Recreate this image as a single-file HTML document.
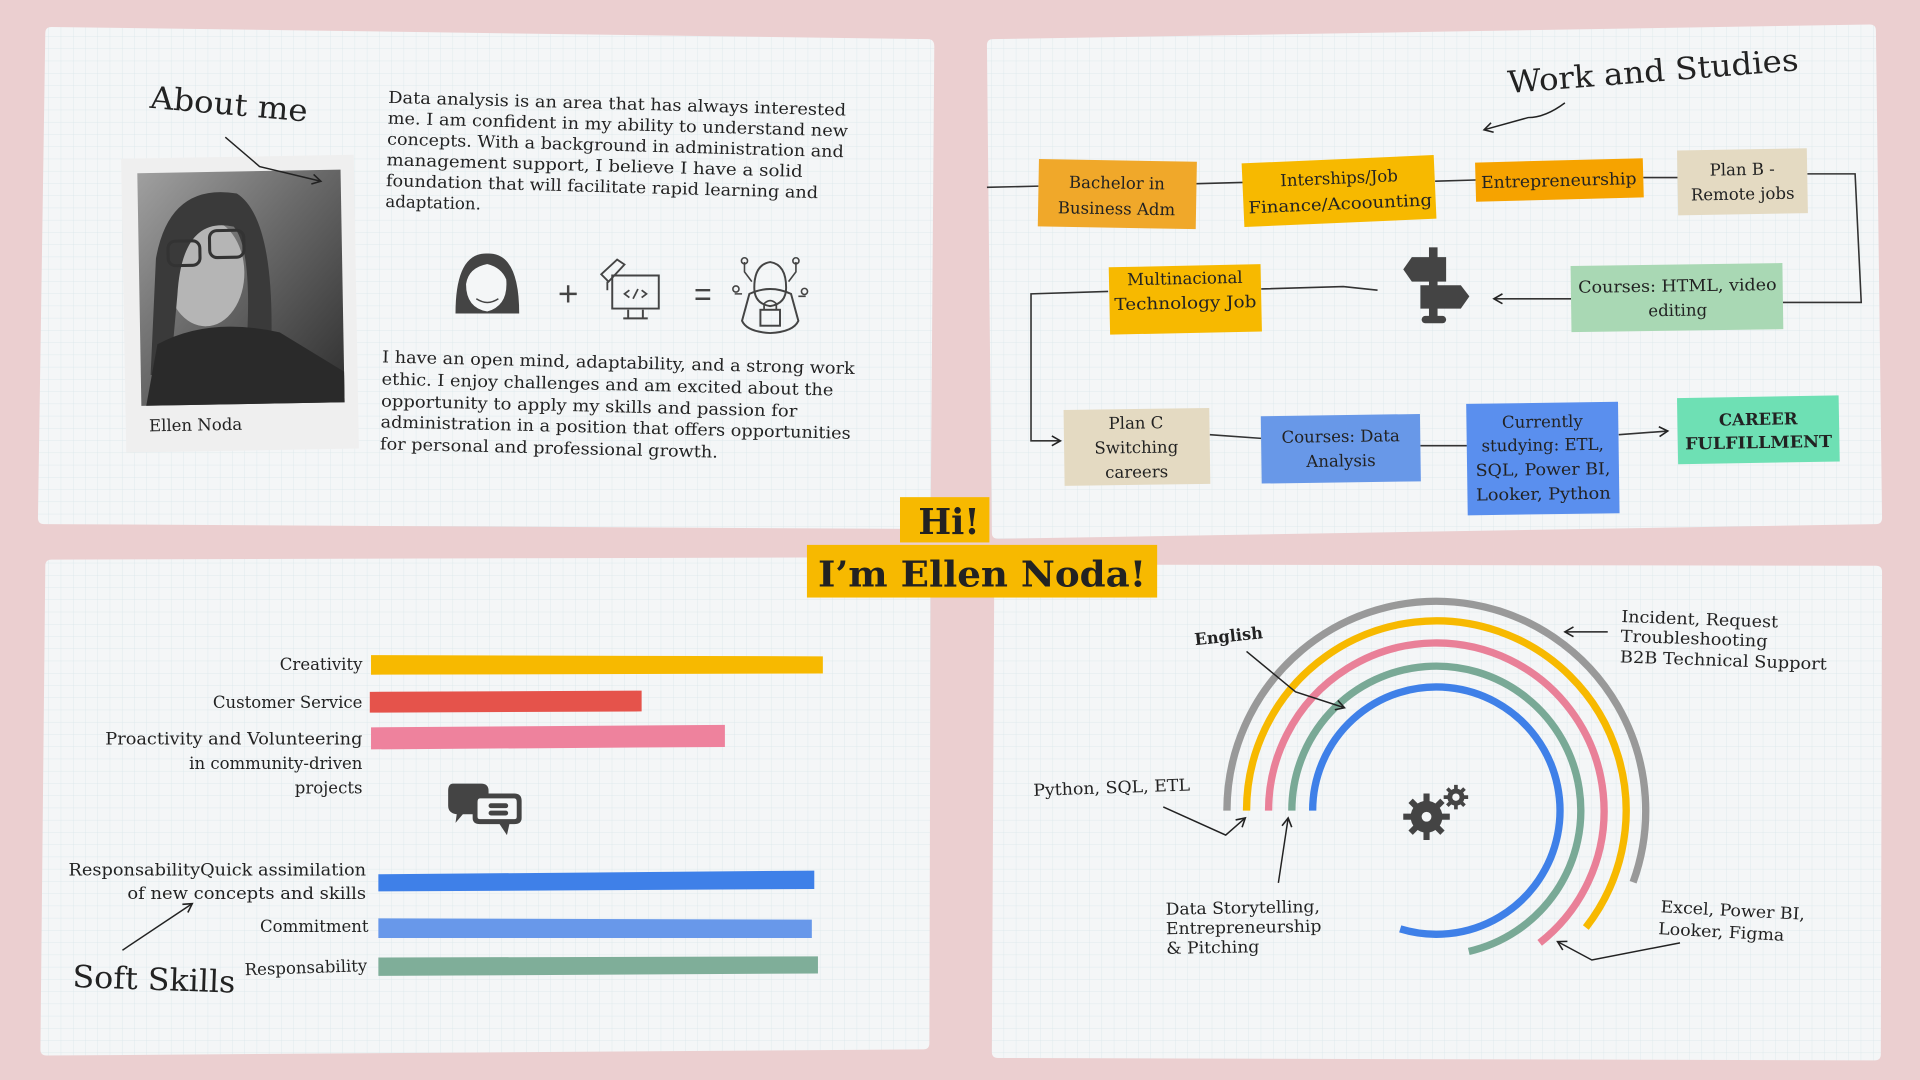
<!DOCTYPE html>
<html><head><meta charset="utf-8"><style>
html,body{margin:0;padding:0;background:#ebcfd0;}
svg{display:block;}
text{font-family:"DejaVu Serif","Liberation Serif",serif;fill:#222;}
</style></head><body>
<svg width="1920" height="1080" viewBox="0 0 1568 882" preserveAspectRatio="none" xmlns="http://www.w3.org/2000/svg">
<defs>
<pattern id="g" width="10" height="10" patternUnits="userSpaceOnUse">
<rect width="10" height="10" fill="#f4f6f7"/>
<path d="M10 0V10M0 10H10" stroke="#d9e6ea" stroke-width="0.6" fill="none"/>
</pattern>
<marker id="ah" markerWidth="10" markerHeight="10" refX="8" refY="5" orient="auto" markerUnits="userSpaceOnUse">
<path d="M1 1L8 5L1 9" fill="none" stroke="#222" stroke-width="1.3"/>
</marker>
<linearGradient id="ph" x1="0" y1="0" x2="1" y2="1"><stop offset="0" stop-color="#a0a0a0"/><stop offset="0.45" stop-color="#6a6a6a"/><stop offset="1" stop-color="#2e2e2e"/></linearGradient>
</defs>
<rect width="1568" height="882" fill="#ebcfd0"/>
<!-- cards -->
<path d="M42 22L758 32Q763 32 763 38L760 427Q760 432 755 432L36 428Q31 428 31 423L37 27Q37 22 42 22Z" fill="url(#g)"/>
<path d="M811 32L1527 20Q1532 20 1532 25L1537 423Q1537 428 1532 428L815 440Q810 440 810 435L806 37Q806 32 811 32Z" fill="url(#g)"/>
<path d="M42 457L755 455Q760 455 760 460L759 852Q759 857 754 857L38 862Q33 862 33 857L37 462Q37 457 42 457Z" fill="url(#g)"/>
<path d="M817 461L1532 462Q1537 462 1537 467L1536 861Q1536 866 1531 866L815 864Q810 864 810 859L812 466Q812 461 817 461Z" fill="url(#g)"/>

<!-- ABOUT ME -->
<text x="122" y="88" font-size="25" textLength="129" lengthAdjust="spacingAndGlyphs" transform="rotate(5 122 88)">About me</text>
<g transform="rotate(-1 196 248)">
<rect x="101" y="128" width="190" height="240" fill="#efefef"/>
<rect x="114" y="140" width="166" height="190" fill="url(#ph)"/>
<ellipse cx="168" cy="222" rx="32" ry="44" fill="#b5b5b5"/>
<path d="M128 210Q140 148 195 158Q228 180 220 300L200 292Q208 205 192 185Q150 175 145 240L138 305L122 305Z" fill="#3a3a3a"/>
<path d="M118 330L128 280Q170 258 228 272L280 305L280 330Z" fill="#2a2a2a"/>
<rect x="138" y="196" width="26" height="20" rx="6" fill="none" stroke="#333" stroke-width="2.5"/>
<rect x="172" y="188" width="28" height="22" rx="6" fill="none" stroke="#333" stroke-width="2.5"/>
<text x="120" y="351" font-size="13.5">Ellen Noda</text>
</g>
<path d="M184 112L212 136L262 148" fill="none" stroke="#222" stroke-width="1.2" marker-end="url(#ah)"/>
<g transform="rotate(1.6 317 84)" font-size="13.5">
<text x="317" y="84" textLength="374" lengthAdjust="spacingAndGlyphs">Data analysis is an area that has always interested</text>
<text x="317" y="101" textLength="376" lengthAdjust="spacingAndGlyphs">me. I am confident in my ability to understand new</text>
<text x="317" y="118" textLength="373" lengthAdjust="spacingAndGlyphs">concepts. With a background in administration and</text>
<text x="317" y="135" textLength="340" lengthAdjust="spacingAndGlyphs">management support, I believe I have a solid</text>
<text x="317" y="152" textLength="353" lengthAdjust="spacingAndGlyphs">foundation that will facilitate rapid learning and</text>
<text x="317" y="169" textLength="78" lengthAdjust="spacingAndGlyphs">adaptation.</text>
</g>
<g transform="rotate(1.4 312 296)" font-size="13.5">
<text x="312" y="296" textLength="386" lengthAdjust="spacingAndGlyphs">I have an open mind, adaptability, and a strong work</text>
<text x="312" y="314" textLength="369" lengthAdjust="spacingAndGlyphs">ethic. I enjoy challenges and am excited about the</text>
<text x="312" y="332" textLength="340" lengthAdjust="spacingAndGlyphs">opportunity to apply my skills and passion for</text>
<text x="312" y="349" textLength="384" lengthAdjust="spacingAndGlyphs">administration in a position that offers opportunities</text>
<text x="312" y="367" textLength="276" lengthAdjust="spacingAndGlyphs">for personal and professional growth.</text>
</g>
<!-- icons row -->
<g fill="#444" stroke="#444">
<path d="M372 256Q372 206 398 207Q424 206 424 256Z" stroke="none"/>
<path d="M380 232Q382 218 398 215Q410 218 414 228Q416 250 398 255Q380 252 380 232Z" fill="#f4f6f7" stroke="#444" stroke-width="1.2"/>
<path d="M389 244Q398 250 407 244" fill="none" stroke-width="1.2"/>
<path d="M457 240H471M464 233V247" fill="none" stroke-width="2"/>
<path d="M500 225H538V252H500Z" fill="none" stroke-width="1.6"/>
<path d="M513 253V260M525 253V260M509 260H529" fill="none" stroke-width="1.6"/>
<path d="M514 237L510 240L514 243M524 237L528 240L524 243M517 244L521 236" fill="none" stroke-width="1.4"/>
<path d="M491 224L504 212L510 216L497 230Z M496 230L496 237" fill="none" stroke-width="1.5"/>
<path d="M568 237H580M568 244H580" fill="none" stroke-width="2"/>
<path d="M616 235Q616 216 629 214Q642 216 642 235Q642 248 629 250Q616 248 616 235Z" fill="none" stroke-width="1.6"/>
<path d="M606 262L612 240Q629 232 646 240L652 262Q648 271 629 272Q610 271 606 262Z" fill="none" stroke-width="1.6"/>
<rect x="621" y="253" width="16" height="13" fill="none" stroke-width="1.6"/>
<path d="M624 253V248Q629 243 634 248V253" fill="none" stroke-width="1.4"/>
<path d="M614 230L608 222V214M644 230L650 222V214M606 240H600M652 242H658" fill="none" stroke-width="1.3"/>
<circle cx="608" cy="213" r="2.5" fill="none" stroke-width="1.3"/><circle cx="650" cy="213" r="2.5" fill="none" stroke-width="1.3"/>
<circle cx="601" cy="236" r="2.5" fill="none" stroke-width="1.3"/><circle cx="657" cy="238" r="2.5" fill="none" stroke-width="1.3"/>
</g>

<!-- WORK AND STUDIES -->
<text x="1232" y="76" font-size="25" textLength="238" lengthAdjust="spacingAndGlyphs" transform="rotate(-4.5 1232 76)">Work and Studies</text>
<path d="M1278 84Q1262 96 1248 96L1212 106" fill="none" stroke="#222" stroke-width="1.2" marker-end="url(#ah)"/>
<g fill="none" stroke="#333" stroke-width="1.3">
<path d="M806 153L848 152M977 150L1015 149M1172 148L1205 147M1342 145L1370 145"/>
<path d="M1476 142L1515 142L1520 247L1456 247"/>
<path d="M1030 236L1097 234L1125 237"/>
<path d="M905 238L842 240L842 360L866 360" marker-end="url(#ah)"/>
<path d="M1283 244L1220 244" marker-end="url(#ah)"/>
<path d="M988 355L1030 358M1160 364L1198 364"/>
<path d="M1322 355L1362 352" marker-end="url(#ah)"/>
</g>
<g fill="#444">
<rect x="1167" y="202" width="7" height="60"/>
<rect x="1161" y="258" width="20" height="6" rx="3"/>
<path d="M1153 210H1181V230H1153L1146 220Z"/>
<path d="M1160 233H1193L1200 242L1193 252H1160Z"/>
</g>
<g font-size="13.5" text-anchor="middle">
<g transform="rotate(1 912 158)"><rect x="848" y="131" width="129" height="55" fill="#f0a82a"/>
<text x="912" y="154">Bachelor in</text><text x="912" y="175">Business Adm</text></g>
<g transform="rotate(-2.5 1094 155)"><rect x="1015" y="130" width="157" height="52" fill="#f7b900"/>
<text x="1094" y="150">Interships/Job</text><text x="1094" y="171" textLength="150" lengthAdjust="spacingAndGlyphs">Finance/Acoounting</text></g>
<g transform="rotate(-1.5 1273 146)"><rect x="1205" y="131" width="137" height="32" fill="#f6a300"/>
<text x="1273" y="152" textLength="127" lengthAdjust="spacingAndGlyphs">Entrepreneurship</text></g>
<g transform="rotate(-1 1423 148)"><rect x="1370" y="122" width="106" height="53" fill="#e4dac2"/>
<text x="1423" y="143">Plan B -</text><text x="1423" y="163">Remote jobs</text></g>
<g transform="rotate(-0.8 1370 243)"><rect x="1283" y="216" width="173" height="54" fill="#a9d8b4"/>
<text x="1370" y="238" textLength="162" lengthAdjust="spacingAndGlyphs">Courses: HTML, video</text><text x="1370" y="258">editing</text></g>
<g transform="rotate(-1.2 968 244)"><rect x="906" y="217" width="124" height="55" fill="#f7b900"/>
<text x="968" y="232">Multinacional</text><text x="968" y="252" textLength="116" lengthAdjust="spacingAndGlyphs">Technology Job</text></g>
<g transform="rotate(-0.8 928 365)"><rect x="869" y="334" width="119" height="62" fill="#e4dac2"/>
<text x="928" y="350">Plan C</text><text x="928" y="370">Switching</text><text x="928" y="390">careers</text></g>
<g transform="rotate(-0.8 1095 366)"><rect x="1030" y="339" width="130" height="55" fill="#6898e8"/>
<text x="1095" y="361">Courses: Data</text><text x="1095" y="381">Analysis</text></g>
<g transform="rotate(-0.8 1260 374)"><rect x="1198" y="329" width="124" height="91" fill="#5a8fee"/>
<text x="1260" y="349">Currently</text><text x="1260" y="368">studying: ETL,</text><text x="1260" y="388" textLength="110" lengthAdjust="spacingAndGlyphs">SQL, Power BI,</text><text x="1260" y="408" textLength="110" lengthAdjust="spacingAndGlyphs">Looker, Python</text></g>
<g transform="rotate(-1 1436 351)"><rect x="1370" y="324" width="132" height="54" fill="#6ee0b4"/>
<text x="1436" y="347" font-weight="bold">CAREER</text><text x="1436" y="366" font-weight="bold" textLength="120" lengthAdjust="spacingAndGlyphs">FULFILLMENT</text></g>
</g>

<rect x="735" y="406" width="73" height="37" fill="#f7b900"/>
<text x="775" y="436" font-size="29" font-weight="bold" text-anchor="middle" fill="#333" textLength="50" lengthAdjust="spacingAndGlyphs">Hi!</text>
<rect x="659" y="445" width="286" height="43" fill="#f7b900"/>
<text x="802" y="479" font-size="29" font-weight="bold" text-anchor="middle" fill="#333" textLength="268" lengthAdjust="spacingAndGlyphs">I’m Ellen Noda!</text>

<!-- SOFT SKILLS -->
<g font-size="13.5" text-anchor="end">
<text x="296" y="547">Creativity</text>
<text x="296" y="578">Customer Service</text>
<text x="296" y="608" textLength="210" lengthAdjust="spacingAndGlyphs">Proactivity and Volunteering</text>
<text x="296" y="628">in community-driven</text>
<text x="296" y="648">projects</text>
<text x="299" y="715" textLength="243" lengthAdjust="spacingAndGlyphs">ResponsabilityQuick assimilation</text>
<text x="299" y="734" textLength="195" lengthAdjust="spacingAndGlyphs">of new concepts and skills</text>
<text x="301" y="761">Commitment</text>
<text x="300" y="793" transform="rotate(-2 300 793)">Responsability</text>
</g>
<path d="M303 535L672 536L672 550L303 551Z" fill="#f7b900"/>
<path d="M302 565L524 564L524 581L302 582Z" fill="#e5534b"/>
<path d="M303 594L592 592L592 610L303 612Z" fill="#ee829d"/>
<path d="M309 714L665 711L665 726L309 728Z" fill="#3f80e8"/>
<path d="M309 750L663 751L663 766L309 766Z" fill="#6898ea"/>
<path d="M309 782L668 781L668 795L309 797Z" fill="#7fae99"/>
<text x="59" y="806" font-size="25" textLength="133" lengthAdjust="spacingAndGlyphs" transform="rotate(2 59 806)">Soft Skills</text>
<path d="M100 776L157 738" fill="none" stroke="#222" stroke-width="1.2" marker-end="url(#ah)"/>
<g fill="#444">
<path d="M370 640H393Q399 640 399 646V660Q399 665 393 665H378L372 672L373 665Q366 664 366 658V646Q366 640 370 640Z"/>
<path d="M392 648H420Q426 648 426 654V668Q426 673 420 673H416L414 682L408 673H392Q386 673 386 668V654Q386 648 392 648Z"/>
<path d="M392 652H420Q422 652 422 655V667Q422 669 420 669H392Q390 669 390 667V655Q390 652 392 652Z" fill="#f4f6f7"/>
<rect x="399" y="656" width="16" height="4" rx="2"/><rect x="399" y="662" width="16" height="4" rx="2"/>
</g>

<!-- RAINBOW -->
<g fill="none" stroke-width="6">
<path d="M1002 662A171 171 0 1 1 1333.7 720.5" stroke="#999"/>
<path d="M1018 662A155 155 0 1 1 1295.1 757.5" stroke="#f7b900"/>
<path d="M1036 662A137 137 0 1 1 1257.4 770" stroke="#e98098"/>
<path d="M1055 662A118 118 0 1 1 1199.5 777" stroke="#79a996"/>
<path d="M1072 662A101 101 0 1 1 1143.5 758.6" stroke="#3f80e8"/>
</g>
<g fill="#444">
<circle cx="1165" cy="667" r="13"/>
<g stroke="#444" stroke-width="5"><path d="M1165 648V686M1146 667H1184M1152 654L1178 680M1178 654L1152 680"/></g>
<circle cx="1165" cy="667" r="4" fill="#f4f6f7"/>
<circle cx="1189" cy="651" r="7"/>
<g stroke="#444" stroke-width="3"><path d="M1189 641V661M1179 651H1199M1182 644L1196 658M1196 644L1182 658"/></g>
<circle cx="1189" cy="651" r="3" fill="#f4f6f7"/>
</g>
<g font-size="13.5">
<text x="976" y="527" font-weight="bold" transform="rotate(-6 976 527)" textLength="56" lengthAdjust="spacingAndGlyphs">English</text>
<text x="1324" y="508" transform="rotate(2 1324 508)" textLength="128" lengthAdjust="spacingAndGlyphs">Incident, Request</text>
<text x="1324" y="524" transform="rotate(2 1324 508)" textLength="120" lengthAdjust="spacingAndGlyphs">Troubleshooting</text>
<text x="1324" y="541" transform="rotate(2 1324 508)" textLength="169" lengthAdjust="spacingAndGlyphs">B2B Technical Support</text>
<text x="844" y="650" transform="rotate(-2 844 650)" textLength="128" lengthAdjust="spacingAndGlyphs">Python, SQL, ETL</text>
<text x="952" y="747" transform="rotate(-1 952 747)" textLength="126" lengthAdjust="spacingAndGlyphs">Data Storytelling,</text>
<text x="952" y="763" transform="rotate(-1 952 747)" textLength="127" lengthAdjust="spacingAndGlyphs">Entrepreneurship</text>
<text x="952" y="779" transform="rotate(-1 952 747)" textLength="76" lengthAdjust="spacingAndGlyphs">&amp; Pitching</text>
<text x="1356" y="745" transform="rotate(3 1356 745)" textLength="118" lengthAdjust="spacingAndGlyphs">Excel, Power BI,</text>
<text x="1355" y="763" transform="rotate(3 1356 745)" textLength="103" lengthAdjust="spacingAndGlyphs">Looker, Figma</text>
</g>
<g fill="none" stroke="#222" stroke-width="1.2">
<path d="M1018 532L1058 565L1098 578" marker-end="url(#ah)"/>
<path d="M1313 516L1278 516" marker-end="url(#ah)"/>
<path d="M950 659L1001 682L1017 668" marker-end="url(#ah)"/>
<path d="M1044 721L1052 668" marker-end="url(#ah)"/>
<path d="M1372 770L1300 784L1272 769" marker-end="url(#ah)"/>
</g>
</svg>
</body></html>
